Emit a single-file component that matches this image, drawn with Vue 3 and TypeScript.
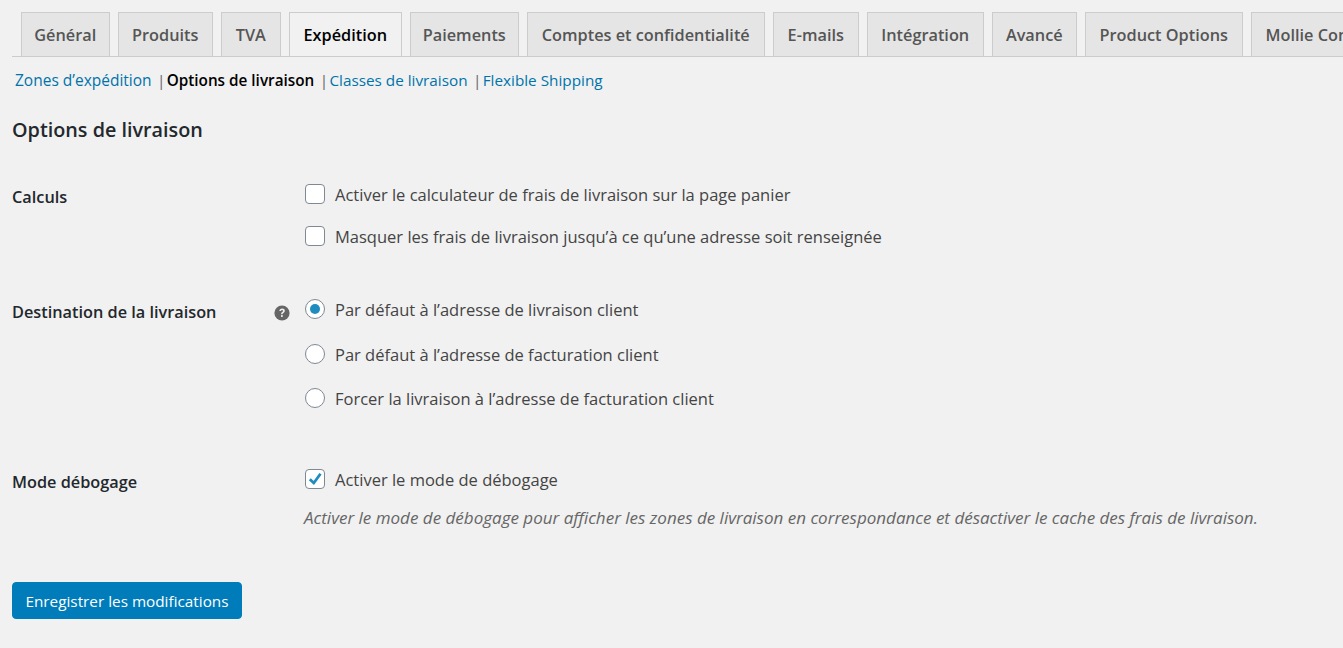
<script setup lang="ts">
const tabs = [
  { label: 'Général', width: 88.5 },
  { label: 'Produits', width: 94.5 },
  { label: 'TVA', width: 59.5 },
  { label: 'Expédition', width: 112.5 },
  { label: 'Paiements', width: 108.5 },
  { label: 'Comptes et confidentialité', width: 237.5 },
  { label: 'E-mails', width: 85.5 },
  { label: 'Intégration', width: 116.5 },
  { label: 'Avancé', width: 84.5 },
  { label: 'Product Options', width: 157.5 },
  { label: 'Mollie Connect', width: 146 },
]
const subs = ['Zones d’expédition', 'Options de livraison', 'Classes de livraison', 'Flexible Shipping']
const destinations = [
  'Par défaut à l’adresse de livraison client',
  'Par défaut à l’adresse de facturation client',
  'Forcer la livraison à l’adresse de facturation client',
]
</script>

<template>
  <div class="wrap">
    <nav class="tabs">
      <a
        v-for="t in tabs"
        :key="t.label"
        class="tab"
        :class="{ active: t.label === 'Expédition' }"
        :style="{ width: t.width + 'px' }"
      >{{ t.label }}</a>
    </nav>
    <ul class="subs">
      <li v-for="(s, i) in subs" :key="s">
        <span v-if="i > 0" class="sep">|</span>
        <a :class="{ current: i === 1 }">{{ s }}</a>
      </li>
    </ul>
    <h2>Options de livraison</h2>

    <div class="row calc">
      <div class="th">Calculs</div>
      <div class="td">
        <label class="opt"><span class="box"></span>Activer le calculateur de frais de livraison sur la page panier</label>
        <label class="opt"><span class="box"></span>Masquer les frais de livraison jusqu’à ce qu’une adresse soit renseignée</label>
      </div>
    </div>

    <div class="row dest">
      <div class="th">
        Destination de la livraison
        <svg class="help" viewBox="0 0 20 20" width="16" height="16">
          <circle cx="10" cy="10" r="9.5" fill="#666" />
          <path d="M6.6 7.6c.2-2 1.6-3.1 3.5-3.1 2 0 3.4 1.1 3.4 2.8 0 1.3-.7 2-1.7 2.6-.8.5-1 .8-1 1.6H8.900c0-1.400.4-2 1.400-2.700.7-.5 1-.8 1-1.400 0-.7-.5-1.100-1.200-1.100-.8 0-1.300.5-1.400 1.300z" fill="#f1f1f1" />
          <rect x="8.800" y="12.600" width="2.100" height="2.300" fill="#f1f1f1" />
        </svg>
      </div>
      <div class="td">
        <label v-for="(d, i) in destinations" :key="d" class="opt">
          <span class="radio" :class="{ on: i === 0 }"></span>{{ d }}
        </label>
      </div>
    </div>

    <div class="row debug">
      <div class="th">Mode débogage</div>
      <div class="td">
        <label class="opt">
          <span class="box">
            <svg viewBox="0 0 20 20" width="20" height="20">
              <path d="M15.500 4.800 8.800 14 4.800 10.200" fill="none" stroke="#1e8cbe" stroke-width="2.800" />
            </svg>
          </span>Activer le mode de débogage
        </label>
        <p class="desc">Activer le mode de débogage pour afficher les zones de livraison en correspondance et désactiver le cache des frais de livraison.</p>
      </div>
    </div>

    <button class="save">Enregistrer les modifications</button>
  </div>
</template>

<style>
html, body {
  background: #f1f1f1;
  margin: 0;
  overflow: hidden;
}
</style>

<style scoped>
.wrap {
  height: 648px;
  padding: 12px 0 0 12px;
  box-sizing: border-box;
  overflow: hidden;
  font-family: "Open Sans", "Noto Sans", sans-serif;
  font-size: 16.5px;
  color: #444;
}

.tabs {
  display: flex;
  height: 44px;
  padding-left: 9px;
  gap: 8.5px;
  border-bottom: 1px solid #ccc;
  white-space: nowrap;
  overflow: hidden;
}

.tab {
  flex: none;
  height: 44px;
  box-sizing: border-box;
  padding: 0;
  line-height: 44px;
  text-align: center;
  background: #e5e5e5;
  border: 1px solid #ccc;
  border-bottom: none;
  color: #555;
  font-weight: 600;
  font-size: 16.3px;
}

.tab.active {
  height: 45px;
  background: #f1f1f1;
  color: #000;
}

.subs {
  display: flex;
  list-style: none;
  margin: 11px 0 0 3px;
  padding: 0;
  height: 25px;
  line-height: 25px;
  font-size: 15.3px;
  color: #666;
}

.subs li:first-child {
  font-size: 15.5px;
}

.subs a {
  color: #0073aa;
}

.subs a.current {
  color: #000;
  font-weight: 600;
}

.sep {
  margin: 0 1.2px 0 5.5px;
}

h2 {
  margin: 24px 0 0;
  font-size: 19.8px;
  line-height: 26px;
  font-weight: 600;
  color: #23282d;
}

.row {
  display: grid;
  grid-template-columns: 292px 1fr;
}

.th {
  position: relative;
  padding-top: 5px;
  font-weight: 600;
  color: #23282d;
  font-size: 16.3px;
}

.help {
  position: absolute;
  left: 262px;
  top: 9px;
}

.opt {
  display: flex;
  align-items: center;
  height: 26px;
}

.box {
  flex: none;
  width: 20px;
  height: 20px;
  box-sizing: border-box;
  margin: 0 10px 0 1px;
  border: 1px solid #7e8993;
  border-radius: 4px;
  background: #fff;
  display: flex;
}

.box svg {
  margin: -1px;
}

.radio {
  flex: none;
  width: 20px;
  height: 20px;
  box-sizing: border-box;
  margin: 0 10px 0 1px;
  border: 1px solid #7e8993;
  border-radius: 50%;
  background: #fff;
  position: relative;
}

.radio.on::after {
  content: '';
  position: absolute;
  inset: 4px;
  border-radius: 50%;
  background: #1e8cbe;
}

.calc {
  margin-top: 38px;
}

.calc .opt + .opt {
  margin-top: 16px;
}

.dest {
  margin-top: 47px;
}

.dest .opt + .opt {
  margin-top: 19px;
}

.dest .opt + .opt + .opt {
  margin-top: 18px;
}

.debug {
  margin-top: 55px;
}

.desc {
  margin: 13px 0 0;
  font-style: italic;
  color: #666;
  font-size: 17px;
  line-height: 26px;
  white-space: nowrap;
}

.save {
  display: block;
  margin-top: 51px;
  width: 230px;
  height: 37px;
  padding: 1px 0 0;
  border: 1px solid #007cba;
  border-radius: 4px;
  background: #007cba;
  color: #fff;
  font-family: inherit;
  font-size: 15.3px;
}
</style>
